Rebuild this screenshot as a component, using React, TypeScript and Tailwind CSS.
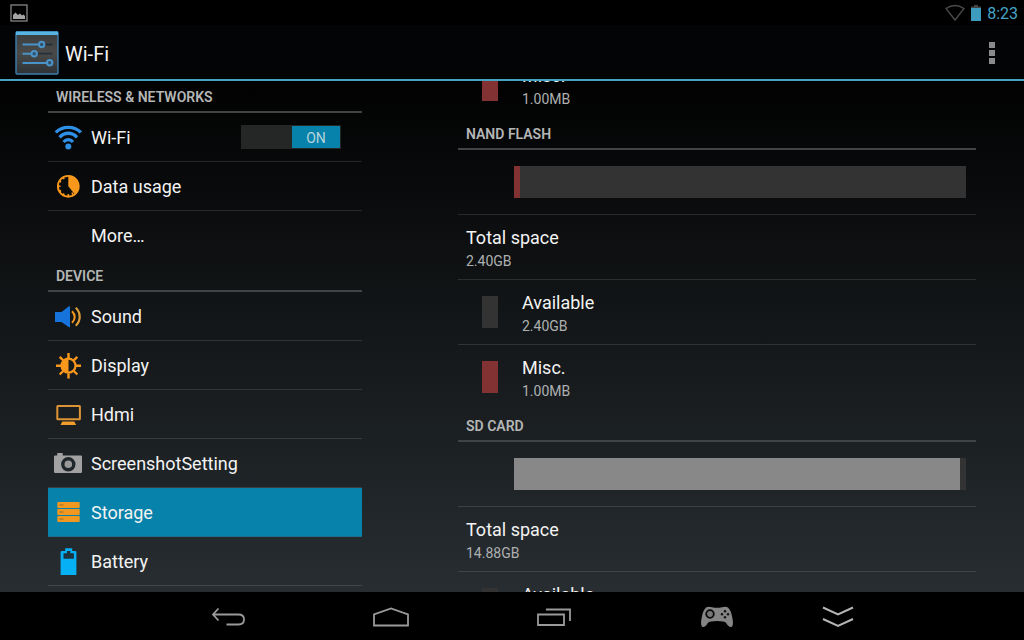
import { useEffect, useRef, useState } from 'react'
import type { ReactNode } from 'react'
import clsx from 'clsx'

const ORANGE = '#f7981d'

function WifiIcon() {
  return (
    <svg viewBox="0 0 28 28" className="size-7" fill="none" stroke="#2f8fe6" strokeWidth="3.3">
      <path d="M1.8 9.5C8 2.6 20.6 2.6 26.8 9.5" />
      <path d="M5.6 14.3c4.8-5.4 12.6-5.4 17.4 0" />
      <path d="M9.6 19c2.7-3.2 6.7-3.2 9.4 0" />
      <circle cx="14.3" cy="23.5" r="3" fill="#2f8fe6" stroke="none" />
    </svg>
  )
}

function DataUsageIcon() {
  return (
    <svg viewBox="0 0 28 28" className="size-7">
      <circle cx="14.3" cy="14.3" r="10.4" fill="none" stroke={ORANGE} strokeWidth="1.9" />
      <path d="M14.3 3.5v10.8l6.6 8.2A10.8 10.8 0 0 0 14.3 3.5z" fill={ORANGE} />
      <path
        d="M14.3 24.5v-2.5M4 14.3h2.5M9.1 5.3l1 1.8M5.3 9.1l1.800 1M5.3 19.5l1.800-1M9.1 23.3l1-1.800M19.4 23.3l-1.5-2.6"
        stroke={ORANGE}
        strokeWidth="1.6"
      />
    </svg>
  )
}

function SoundIcon() {
  return (
    <svg viewBox="0 0 28 28" className="size-7" fill="none">
      <path d="M1 10h6.5L15 4.3h1v21h-1L7.5 20H1z" fill="#1673dc" />
      <path d="M18 9.2c3.6 3.4 3.6 8.2 0 11.6" stroke={ORANGE} strokeWidth="2" />
      <path d="M21.8 5.8c5.2 5.2 5.2 12.8 0 18" stroke="#dd9c36" strokeWidth="2.2" />
    </svg>
  )
}

function DisplayIcon() {
  return (
    <svg viewBox="0 0 28 28" className="size-7" fill="none" stroke={ORANGE}>
      <path
        d="M14.5 2v5M14.5 22.5v5M2 14.7h5M22 14.7h5M5.7 5.9l3.5 3.5M19.8 20l3.5 3.5M5.7 23.5L9.2 20M19.8 9.4l3.5-3.5"
        strokeWidth="2.4"
      />
      <circle cx="14.5" cy="14.7" r="7" strokeWidth="2.2" />
      <path d="M14.5 8v13.4a6.7 6.7 0 0 1 0-13.4z" fill={ORANGE} stroke="none" />
    </svg>
  )
}

function HdmiIcon() {
  return (
    <svg viewBox="0 0 28 28" className="size-7">
      <rect x="3.3" y="6" width="22.6" height="13.2" rx="0.5" fill="none" stroke="#dd9434" strokeWidth="2" />
      <path d="M8.3 21.6h12l1.9 3.5H6.5z" fill="#ee9c2c" />
    </svg>
  )
}

function CameraIcon() {
  return (
    <svg viewBox="0 0 28 28" className="size-7">
      <path d="M1.2 6.5h2V4h5.5v2.5h18.1q1.2 0 1.2 1.2v15.1q0 1.2-1.2 1.2H1.2Q0 24 0 22.8V7.7q0-1.2 1.2-1.2z" fill="#a2a2a2" />
      <circle cx="14.3" cy="15.3" r="5.5" fill="#999" stroke="#20272a" strokeWidth="3.4" />
    </svg>
  )
}

function StorageIcon() {
  return (
    <svg viewBox="0 0 28 28" className="size-7">
      {[4, 11, 18].map((y) => (
        <g key={y}>
          <rect x="3.3" y={y} width="22.4" height="6" rx="1" fill="#f0981f" />
          <path d={`M5.5 ${y + 3}h4`} stroke="#a9772f" strokeWidth="1.2" />
        </g>
      ))}
    </svg>
  )
}

function BatteryIcon() {
  return (
    <svg viewBox="0 0 28 28" className="size-7">
      <path d="M11.2 1.2h7V4h3q1.2 0 1.2 1.2V28H6.6V5.2Q6.6 4 7.8 4h3.4z" fill="#06b0f5" />
      <path d="M13 4h3.4v2.3h3.5v5.5H9.5V6.3H13z" fill="#1d343f" />
    </svg>
  )
}

function SettingsLogo() {
  return (
    <svg viewBox="0 0 44 44" className="size-11">
      <defs>
        <linearGradient id="tile" x1="0" y1="0" x2="0" y2="1">
          <stop offset="0" stopColor="#3a3d3f" />
          <stop offset="0.5" stopColor="#4a4a49" />
          <stop offset="1" stopColor="#2e3236" />
        </linearGradient>
      </defs>
      <rect x="1" y="1" width="42" height="42" rx="1" fill="url(#tile)" stroke="#3d7fae" strokeWidth="1.4" />
      <path d="M1 0.5h42v3.5H1z" fill="#55b4e2" />
      <g stroke="#27303a" strokeWidth="1.8">
        <path d="M30 13.5h7.5M23 22.7h14.5" />
      </g>
      <g stroke="#4a93c8" strokeWidth="2" fill="#31516b">
        <path d="M7.5 13.5h16M7.5 22.7h8.5M7.5 32h24.5" />
        <circle cx="26.7" cy="13.5" r="2.7" />
        <circle cx="19.2" cy="22.7" r="2.7" />
        <circle cx="34.7" cy="31.7" r="2.7" />
      </g>
    </svg>
  )
}

interface ItemProps {
  icon?: ReactNode
  label: string
  selected?: boolean
  last?: boolean
  onSelect: () => void
  children?: ReactNode
}

function MenuItem({ icon, label, selected, last, onSelect, children }: ItemProps) {
  return (
    <li
      className={clsx(
        'flex h-[49px] items-center border-b',
        selected ? 'border-[#1d6f8c] bg-[#0782aa]' : last ? 'border-transparent' : 'border-white/12',
      )}
    >
      <button
        type="button"
        onClick={onSelect}
        className="flex h-full flex-1 items-center gap-[9px] pl-1.5 text-left text-lg text-[#f3f3f3]"
      >
        <span className="size-7 shrink-0">{icon}</span>
        <span className="pt-0.5">{label}</span>
      </button>
      {children}
    </li>
  )
}

function SectionTitle({ children }: { children: ReactNode }) {
  return (
    <h2 className="flex h-8 items-center border-b-2 border-[#414445] px-2 pt-0.5 text-sm font-semibold text-[#b5b7b7]">
      {children}
    </h2>
  )
}

interface RowProps {
  title: string
  summary: string
  swatch?: string
  last?: boolean
}

function StorageRow({ title, summary, swatch, last }: RowProps) {
  return (
    <div
      className={clsx(
        'flex h-[65px] items-center border-b',
        last ? 'border-transparent' : 'border-white/12',
        swatch ? 'gap-6 pl-6' : 'pl-2',
      )}
    >
      {swatch && <span className={clsx('h-8 w-4', swatch)} />}
      <div className="pt-1">
        <div className="text-lg leading-6 text-[#f3f3f3]">{title}</div>
        <div className="text-sm leading-[22px] text-[#aeb0b1]">{summary}</div>
      </div>
    </div>
  )
}

function UsageBar({ percent, color }: { percent: number; color: string }) {
  return (
    <div className="flex h-[65px] items-center border-b border-white/12 pr-2.5 pl-14">
      <div className="h-8 w-full bg-[#333]">
        <div className={clsx('h-full', color)} style={{ width: `${percent}%` }} />
      </div>
    </div>
  )
}

const DEVICE_ITEMS = [
  { label: 'Sound', icon: <SoundIcon /> },
  { label: 'Display', icon: <DisplayIcon /> },
  { label: 'Hdmi', icon: <HdmiIcon /> },
  { label: 'ScreenshotSetting', icon: <CameraIcon /> },
  { label: 'Storage', icon: <StorageIcon /> },
  { label: 'Battery', icon: <BatteryIcon /> },
]

export default function App() {
  const [selected, setSelected] = useState('Storage')
  const [wifi, setWifi] = useState(true)
  const detailRef = useRef<HTMLElement>(null)

  useEffect(() => {
    if (detailRef.current) detailRef.current.scrollTop = 28
  }, [])

  return (
    <div className="flex h-screen flex-col overflow-hidden bg-linear-to-b/srgb from-black from-10% to-[#272d31] to-92% font-[Roboto,sans-serif]">
      <div className="flex h-[25px] shrink-0 items-center justify-between bg-black pr-1.5 pl-2.5">
        <svg viewBox="0 0 18 18" className="size-[18px]">
          <rect x="1" y="1" width="16" height="16" fill="none" stroke="#858585" strokeWidth="1.3" />
          <path d="M3 15v-4l2.5-2.5L8 11l2-1.5 2 2 1.5-1L15 12v3z" fill="#a5a5a5" />
        </svg>
        <div className="flex items-center gap-1.5 text-base text-[#45a5c9]">
          <svg viewBox="0 0 20 18" className="h-[18px] w-5" fill="none" stroke="#4a4a4a" strokeWidth="1.4">
            <path d="M1 4.5Q10-1.5 19 4.5L10 16z" />
          </svg>
          <svg viewBox="0 0 10 18" className="h-[18px] w-2.5">
            <path d="M3 1h4v1.5h3V5H0V2.5h3z" fill="#444" />
            <path d="M0 4h10v13H0z" fill="#3d9bbf" />
          </svg>
          <span className="pt-0.5">8:23</span>
        </div>
      </div>

      <header className="flex h-14 shrink-0 items-center justify-between border-b-2 border-[#46a3c2] bg-[#020405] pt-0.5 pr-6 pl-[15px]">
        <div className="flex items-center gap-1.5">
          <SettingsLogo />
          <h1 className="pt-0.5 text-xl text-[#f3f3f3]">Wi-Fi</h1>
        </div>
        <button type="button" aria-label="More options" className="flex w-4 flex-col items-center gap-0.5">
          <span className="size-1.5 bg-[#8a8a8a]" />
          <span className="size-1.5 bg-[#8a8a8a]" />
          <span className="size-1.5 bg-[#8a8a8a]" />
        </button>
      </header>

      <div className="grid min-h-0 flex-1 grid-cols-[314fr_518fr] gap-24 px-12">
        <nav className="overflow-y-auto [scrollbar-width:none]">
          <SectionTitle>WIRELESS &amp; NETWORKS</SectionTitle>
          <ul>
            <MenuItem
              label="Wi-Fi"
              icon={<WifiIcon />}
              selected={selected === 'Wi-Fi'}
              onSelect={() => setSelected('Wi-Fi')}
            >
              <label className="relative mr-[21px] flex h-6 w-[100px] items-center bg-[#252727] p-px">
                <input
                  type="checkbox"
                  role="switch"
                  aria-label="Wi-Fi"
                  checked={wifi}
                  onChange={(e) => setWifi(e.target.checked)}
                  className="absolute inset-0 size-full cursor-pointer appearance-none"
                />
                <span
                  className={clsx(
                    'pointer-events-none flex h-full w-12 items-center justify-center pt-0.5 text-sm',
                    wifi ? 'ml-auto bg-[#0782aa] text-[#b9d3dc]' : 'bg-[#555] text-[#aaa]',
                  )}
                >
                  {wifi ? 'ON' : 'OFF'}
                </span>
              </label>
            </MenuItem>
            <MenuItem
              label="Data usage"
              icon={<DataUsageIcon />}
              selected={selected === 'Data usage'}
              onSelect={() => setSelected('Data usage')}
            />
            <MenuItem label="More…" last selected={selected === 'More'} onSelect={() => setSelected('More')} />
          </ul>
          <SectionTitle>DEVICE</SectionTitle>
          <ul>
            {DEVICE_ITEMS.map(({ label, icon }) => (
              <MenuItem
                key={label}
                label={label}
                icon={icon}
                selected={selected === label}
                onSelect={() => setSelected(label)}
              />
            ))}
          </ul>
        </nav>

        <main ref={detailRef} className="overflow-y-auto [scrollbar-width:none]">
          <StorageRow title="Misc." summary="1.00MB" swatch="bg-[#823233]" last />
          <SectionTitle>NAND FLASH</SectionTitle>
          <UsageBar percent={1.4} color="bg-[#823233]" />
          <StorageRow title="Total space" summary="2.40GB" />
          <StorageRow title="Available" summary="2.40GB" swatch="bg-[#333]" />
          <StorageRow title="Misc." summary="1.00MB" swatch="bg-[#823233]" last />
          <SectionTitle>SD CARD</SectionTitle>
          <UsageBar percent={98.6} color="bg-[#888]" />
          <StorageRow title="Total space" summary="14.88GB" />
          <StorageRow title="Available" summary="14.88GB" swatch="bg-[#333]" />
        </main>
      </div>

      <footer className="flex h-12 shrink-0 justify-center bg-black pt-0.5">
        <button type="button" aria-label="Back" className="flex w-[163px] items-center justify-center">
          <svg viewBox="0 0 34 20" className="h-5 w-[34px]" fill="none" stroke="#9a9a9a" strokeWidth="1.8">
            <path d="M2 7.5h25.5q5.5 0 5.5 5t-5.5 5H15.5M7.5 1.5L2 7.5l5.5 6" />
          </svg>
        </button>
        <button type="button" aria-label="Home" className="flex w-[163px] items-center justify-center">
          <svg viewBox="0 0 36 20" className="h-5 w-9" fill="none" stroke="#9a9a9a" strokeWidth="1.8">
            <path d="M1 18.5v-11L18 1.5l17 6v11z" />
          </svg>
        </button>
        <button type="button" aria-label="Recent apps" className="flex w-[163px] items-center justify-center">
          <svg viewBox="0 0 34 20" className="h-5 w-[34px]" fill="none" stroke="#9a9a9a" strokeWidth="1.8">
            <path d="M1 7.500h26v10.500H1zM9 2.500h24v11.500" />
          </svg>
        </button>
        <button type="button" aria-label="Game pad" className="flex w-[163px] items-center justify-center">
          <svg viewBox="0 0 34 22" className="h-[22px] w-[34px]">
            <path
              d="M6 1.5Q8.5 0 12 1.2q5 1.3 10 0Q25.5 0 28 1.5 31 4 32.5 12.5q1.3 7.5-1 8.5-2.5.8-5.5-4.2Q24.7 15 17 15t-9 1.8Q5 21.8 2.5 21 .2 20 1.5 12.5 3 4 6 1.5z"
              fill="#858585"
            />
            <circle cx="10" cy="8" r="3.8" fill="#777" stroke="#0a0a0a" strokeWidth="1.8" />
            <g fill="#111">
              <circle cx="25" cy="5.3" r="1.2" />
              <circle cx="25" cy="11.3" r="1.2" />
              <circle cx="22" cy="8.3" r="1.2" />
              <circle cx="28" cy="8.3" r="1.2" />
            </g>
          </svg>
        </button>
        <button type="button" aria-label="Hide bar" className="flex w-20 items-center justify-center">
          <svg viewBox="0 0 32 22" className="h-[22px] w-8" fill="none" stroke="#b5b5b5" strokeWidth="2">
            <path d="M1 1.5L16 8.5l15-7M1 13l15 7 15-7" />
          </svg>
        </button>
      </footer>
    </div>
  )
}
